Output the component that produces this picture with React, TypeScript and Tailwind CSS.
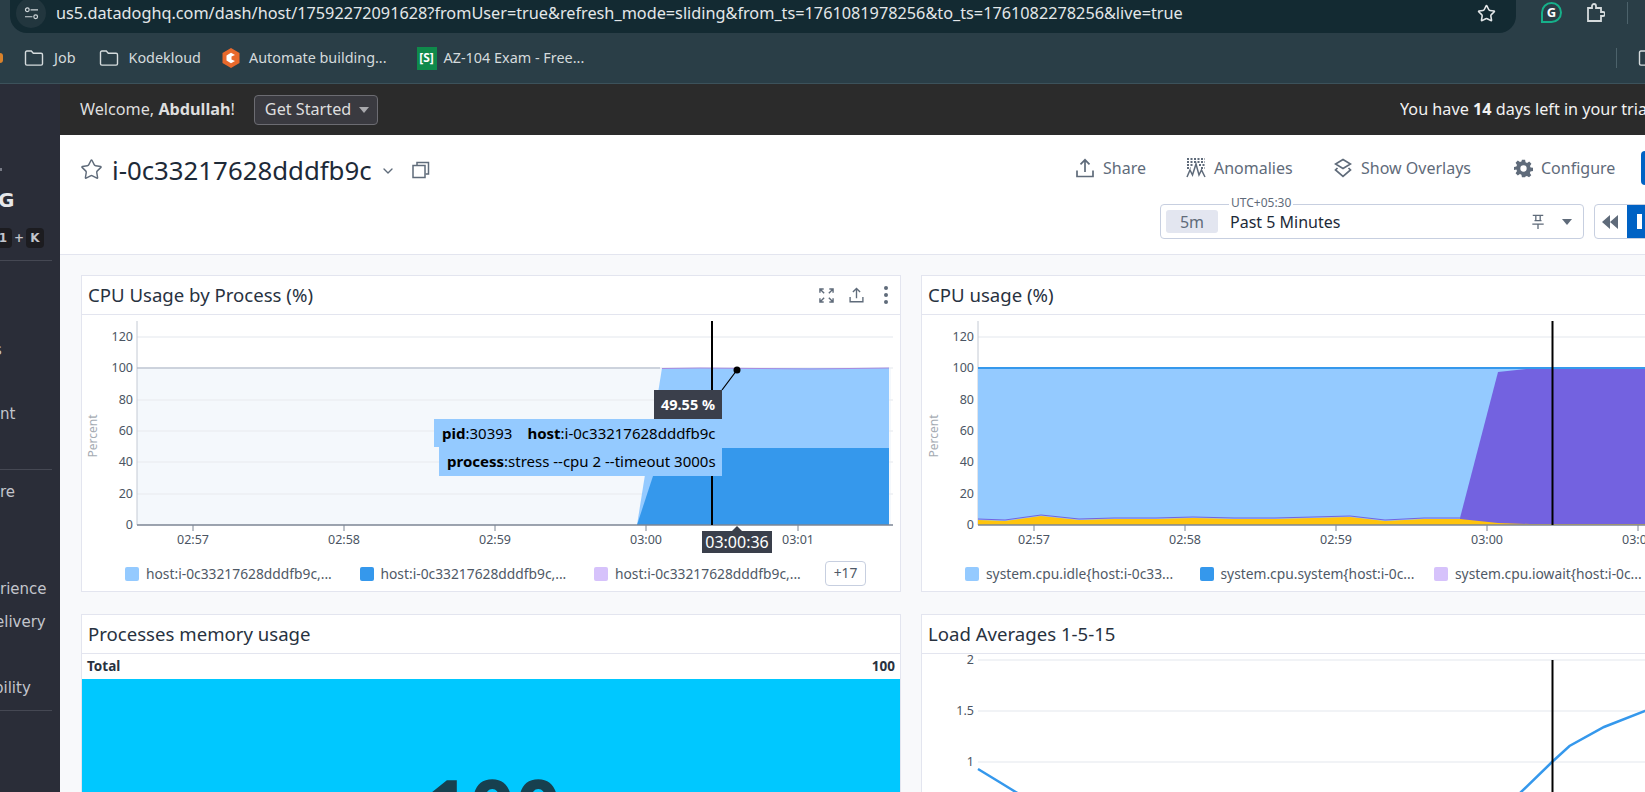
import { ChevronDown, Star } from 'lucide-react'

const FONT = { fontFamily: '"Noto Sans", sans-serif' }

const TICKS = ['02:57', '02:58', '02:59', '03:00', '03:01']
const Y_LABELS = [
  ['120', 337],
  ['100', 368],
  ['80', 400],
  ['60', 431],
  ['40', 462],
  ['20', 494],
  ['0', 525],
] as const

function FolderIcon({ className }: { className?: string }) {
  return (
    <svg viewBox="0 0 20 18" className={`shrink-0 ${className ?? ''}`} fill="none" stroke="currentColor" strokeWidth="1.4">
      <path d="M1.5 3.5c0-.8.6-1.5 1.4-1.5h4.4l2 2.3h7.800c.8 0 1.4.6 1.400 1.400v9c0 .8-.6 1.400-1.400 1.400H2.900c-.8 0-1.400-.6-1.400-1.400z" />
    </svg>
  )
}

function ShareIcon({ className }: { className?: string }) {
  return (
    <svg viewBox="0 0 18 20" className={`shrink-0 ${className ?? ''}`} fill="none" stroke="currentColor" strokeWidth="1.7">
      <path d="M9 14V2M4.500 6.300 9 1.800l4.500 4.500M1 12.500V18.500h16v-6" />
    </svg>
  )
}

function AnomaliesIcon() {
  return (
    <svg viewBox="0 0 20 20" className="w-5 h-5 text-[#5f6b7a]" fill="none" stroke="currentColor">
      <path d="M1 19l3-7 2.500 5L10 6l3 11 2.500-5 3.500 7" strokeWidth="1.500" />
      <path d="M1 1h18M1 4h18M1 7h6M13 7h6M1 10h4M15 10h4" strokeWidth="2" strokeDasharray="2 1.500" />
    </svg>
  )
}

function LayersIcon() {
  return (
    <svg viewBox="0 0 18 20" className="w-[18px] h-5 text-[#5f6b7a]" fill="none" stroke="currentColor" strokeWidth="1.700">
      <path d="M9 1.500 16.500 6 9 10.500 1.500 6z" />
      <path d="M3.500 10 1.500 12 9 18.500 16.500 12l-2-2" />
    </svg>
  )
}

function GearIcon() {
  return (
    <svg viewBox="0 0 24 24" className="w-[19px] h-[19px] text-[#5f6b7a]" fill="currentColor">
      <path fillRule="evenodd" d="M10 1h4l.6 3.200 1.900.8 2.700-1.800 2.800 2.800-1.800 2.700.8 1.900 3 .6v4l-3.200.6-.8 1.900 1.800 2.700-2.800 2.800-2.700-1.800-1.900.8L14 23h-4l-.6-3.200-1.900-.8-2.700 1.800-2.800-2.800 1.800-2.700-.8-1.900L0 14v-4l3-.6.8-1.900L2 4.800 4.800 2l2.700 1.800 1.900-.8zM12 8a4 4 0 1 0 0 8 4 4 0 0 0 0-8z" />
    </svg>
  )
}

function Caret({ className }: { className: string }) {
  return <span className={`w-0 h-0 shrink-0 border-x-[5px] border-x-transparent border-t-[6px] ${className}`} />
}

function Card({ title, actions, children, className }: { title: string; actions?: boolean; children: React.ReactNode; className?: string }) {
  return (
    <div className={`bg-white border border-[#e3e5ef] flex flex-col ${className ?? ''}`}>
      <div className="h-[39px] shrink-0 border-b border-[#e3e5ef] flex items-center pl-[6px] pr-[6px]">
        <span className="text-[18.600px] text-[#28323f]">{title}</span>
        {actions && (
          <div className="ml-auto flex items-center text-[#5f6b7a]">
            <svg viewBox="0 0 16 16" className="w-[15px] h-[15px]" fill="none" stroke="currentColor" strokeWidth="1.500">
              <path d="M1 5V1h4M1 1l4.500 4.500M11 1h4v4M15 1l-4.500 4.500M1 11v4h4M1 15l4.500-4.500M15 11v4h-4M15 15l-4.500-4.500" />
            </svg>
            <ShareIcon className="w-[15px] h-[16px] ml-[15px]" />
            <div className="ml-[20px] mr-[6px] flex flex-col gap-[3px]">
              <span className="w-[4px] h-[4px] rounded-full bg-[#5f6b7a]" />
              <span className="w-[4px] h-[4px] rounded-full bg-[#5f6b7a]" />
              <span className="w-[4px] h-[4px] rounded-full bg-[#5f6b7a]" />
            </div>
          </div>
        )}
      </div>
      {children}
    </div>
  )
}

function Axis({ offset }: { offset: number }) {
  const left = offset === 0 ? 137 : 978
  const right = offset === 0 ? 893 : 1741
  const tickX = offset === 0 ? [193, 344, 495, 646, 798] : [1034, 1185, 1336, 1487, 1638]
  return (
    <>
      {Y_LABELS.map(([label, y]) => (
        <g key={label}>
          {label !== '0' && <line x1={left} x2={right} y1={y} y2={y} stroke="#edeff3" strokeWidth="1.500" />}
          <text x={left - 4} y={y + 4} textAnchor="end" fontSize="12.500" fill="#4b5563">{label}</text>
        </g>
      ))}
      <line x1={left} x2={left} y1={321} y2={525} stroke="#c4cad4" />
      <text transform={`translate(${left - 40} 436) rotate(-90)`} textAnchor="middle" fontSize="12" fill="#a5abb3">Percent</text>
      {tickX.map((x, i) => (
        <g key={x}>
          <line x1={x} x2={x} y1={525} y2={531} stroke="#7d8694" />
          <text x={x} y={543.500} textAnchor="middle" fontSize="12.500" fill="#4b5563">{TICKS[i]}</text>
        </g>
      ))}
    </>
  )
}

function Legend({ items, more }: { items: [string, string][]; more?: string }) {
  return (
    <div className="h-[36px] flex items-center pl-[43px] pt-[2px] text-[13.800px] text-[#4f5966]">
      {items.map(([color, label], i) => (
        <div key={i} className={`flex items-center gap-[7px] ${i === 2 && more ? 'w-[231px]' : 'w-[234.500px]'} shrink-0`}>
          <span className="w-[14px] h-[14px] rounded-[2px] shrink-0" style={{ backgroundColor: color }} />
          <span className="whitespace-nowrap">{label}</span>
        </div>
      ))}
      {more && (
        <span className="w-[41px] h-[25px] border border-[#c7cfe0] rounded-[4px] flex items-center justify-center text-[13.800px] text-[#4f5966] -mt-[2px]">{more}</span>
      )}
    </div>
  )
}

function ProcessChart() {
  return (
    <div className="relative h-[240px] shrink-0">
      <svg viewBox="82 315 818 240" className="w-[818px] h-[240px] block" style={FONT}>
        <rect x="137" y="368" width="754" height="157" fill="#f4f8fc" />
        <Axis offset={0} />
        <path d="M637 525 662 368H889V525Z" fill="#94caff" />
        <path d="M637 525 653 476 680 448H889V525Z" fill="#3598ec" />
        <path d="M137 368H660" stroke="#a9b4c4" strokeWidth="1.200" />
        <path d="M662 368.500 700 368 760 368.500 810 369 889 368" stroke="#a78be0" strokeWidth="1" fill="none" />
        <path d="M137 525H893" stroke="#7d8694" strokeWidth="1.500" />
        <line x1="712" x2="712" y1="321" y2="525" stroke="#000" strokeWidth="2" />
        <line x1="722" x2="737" y1="390" y2="370" stroke="#000" strokeWidth="1.200" />
        <circle cx="737" cy="370" r="3.500" fill="#000" />
      </svg>
      <div className="absolute left-[572px] top-[75px] w-[68px] h-[29px] bg-[#3a3f4b] text-white text-[14.500px] font-bold flex items-center justify-center">49.55 %</div>
      <div className="absolute left-[352px] top-[104px] w-[288px] h-[28px] bg-[#94caff] text-[15px] text-black flex items-center pl-[8px] whitespace-nowrap">
        <b className="font-bold">pid</b>:30393<b className="font-bold ml-[15px]">host</b>:i-0c33217628dddfb9c
      </div>
      <div className="absolute left-[357px] top-[132px] w-[283px] h-[29px] bg-[#94caff] text-[15px] text-black flex items-center pl-[8px] whitespace-nowrap">
        <b className="font-bold">process</b>:stress --cpu 2 --timeout 3000s
      </div>
      <div className="absolute left-[620px] top-[216px] w-[70px] h-[22px] bg-[#3a3f4b] text-white text-[16px] flex items-center justify-center">03:00:36</div>
      <div className="absolute left-[649px] top-[211px] w-0 h-0 border-x-[6px] border-x-transparent border-b-[6px] border-b-[#3a3f4b]" />
    </div>
  )
}

function CpuChart() {
  return (
    <svg viewBox="922 315 818 240" className="w-[818px] h-[240px] block shrink-0" style={FONT}>
      <Axis offset={1} />
      <path d="M978 368H1741V525H978Z" fill="#94caff" />
      <path d="M1460 518 1498 372 1535 368H1741V525H1460Z" fill="#7362e0" />
      <path d="M978 520 1005 521 1041 516 1079 520 1114 519 1156 519 1193 518 1234 519 1275 519 1313 518 1350 517 1385 521 1424 519 1460 519 1498 523 1530 524 1741 524V525H978Z" fill="#ffc40d" />
      <path d="M978 519 1005 520 1041 515 1079 519 1114 518 1156 518 1193 517 1234 518 1275 518 1313 517 1350 516 1385 520 1424 518 1460 518" stroke="#7362e0" strokeWidth="1" fill="none" />
      <path d="M978 368H1741" stroke="#3598ec" strokeWidth="1.800" />
      <path d="M978 525H1741" stroke="#7d8694" strokeWidth="1.500" />
      <line x1="1552.500" x2="1552.500" y1="321" y2="525" stroke="#000" strokeWidth="2" />
    </svg>
  )
}

function LoadChart() {
  return (
    <svg viewBox="922 654 818 140" className="w-[818px] h-[140px] block shrink-0" style={FONT}>
      {[['2', 660], ['1.5', 711], ['1', 762]].map(([label, y]) => (
        <g key={label}>
          <line x1="978" x2="1741" y1={y} y2={y} stroke="#edeff3" strokeWidth="1.500" />
          <text x="974" y={Number(y) + 4} textAnchor="end" fontSize="12.500" fill="#4b5563">{label}</text>
        </g>
      ))}
      <path d="M978 769 1001 783 1019 794M1519 794 1552 762 1569.500 746 1604 727 1645 711 1741 690" stroke="#3598ec" strokeWidth="2.500" fill="none" />
      <line x1="1552.500" x2="1552.500" y1="660" y2="794" stroke="#000" strokeWidth="2" />
    </svg>
  )
}

export default function App() {
  return (
    <div className="w-[1645px] h-[792px] overflow-hidden flex flex-col" style={FONT}>
      {/* browser chrome */}
      <div className="h-[84px] shrink-0 bg-[#2a3e47] border-b border-[#3c525b] flex flex-col text-[#d5dbdd]">
        <div className="h-[33px] flex items-start">
          <div className="ml-[10px] w-[1506px] h-[33px] bg-[#132a32] rounded-b-[17px] flex items-center pb-[7px] overflow-hidden">
            <span className="ml-[6px] w-[30px] h-[30px] shrink-0 rounded-full bg-[#22363e] flex items-center justify-center">
              <svg viewBox="0 0 16 14" className="w-[15px] h-[13px]" fill="none" stroke="#cfd6d9" strokeWidth="1.300">
                <circle cx="3.500" cy="3" r="2" /><path d="M7 3h8M1 10.500h8" /><circle cx="12.500" cy="10.500" r="2" />
              </svg>
            </span>
            <span className="ml-[10px] text-[16.250px] text-[#e3e7e9] whitespace-nowrap">us5.datadoghq.com/dash/host/17592272091628?fromUser=true&refresh_mode=sliding&from_ts=1761081978256&to_ts=1761082278256&live=true</span>
            <Star className="ml-auto mr-[20px] w-[19px] h-[19px] text-[#e3e7e9]" strokeWidth={2} />
          </div>
          <span className="ml-[25px] mt-[2px] w-[21px] h-[21px] rounded-full rounded-bl-[3px] border-[2.500px] border-[#16b08a] text-[13px] font-bold text-white flex items-center justify-center">G</span>
          <svg viewBox="0 0 20 20" className="ml-[23px] mt-[3px] w-[20px] h-[20px]" fill="none" stroke="#d5dbdd" strokeWidth="1.800">
            <path d="M3 5h4V3a2 2 0 0 1 4 0v2h5v4h2a2 2 0 0 1 0 4h-2v5H3z" />
          </svg>
          <span className="ml-[22px] mt-[2px] w-px h-[22px] bg-[#4c626b]" />
        </div>
        <div className="flex-1 flex items-center text-[14.400px]">
          <span className="w-[3px] h-[10px] bg-[#d9822b] rounded-r-full" />
          <FolderIcon className="ml-[21px] w-[20px] h-[18px]" />
          <span className="ml-[10px]">Job</span>
          <FolderIcon className="ml-[23px] w-[20px] h-[18px]" />
          <span className="ml-[10px]">Kodekloud</span>
          <svg viewBox="0 0 20 20" className="ml-[20px] w-[20px] h-[20px]">
            <path d="M10 0 18.500 5v10L10 20 1.500 15V5z" fill="#e8692c" />
            <path d="M14 7 10 4.800 5.500 7.500v5L10 15.200l4-2.200-3.500-1.500V8.500z" fill="#fff" />
          </svg>
          <span className="ml-[8px]">Automate building...</span>
          <span className="ml-[30px] w-[20px] h-[23px] bg-[#0f8a4b] text-white text-[12px] font-bold flex items-center justify-center">[S]</span>
          <span className="ml-[7px]">AZ-104 Exam - Free...</span>
          <span className="ml-auto w-px h-[20px] bg-[#4c626b]" />
          <FolderIcon className="ml-[21px] mr-[-13px] w-[20px] h-[18px]" />
        </div>
      </div>

      <div className="flex-1 flex min-h-0">
        {/* clipped nav */}
        <div className="w-[60px] shrink-0 bg-[#2a2d38] overflow-hidden text-[15px] text-[#c3c5cc] whitespace-nowrap" style={{ fontFamily: '"DejaVu Sans", sans-serif' }}>
          <div className="mt-[84px] w-[2px] h-[3px] bg-[#777a85]" />
          <div className="mt-[15px] -ml-[2px] text-[20px] font-bold text-[#e6e7ea] leading-[28px]">G</div>
          <div className="mt-[14px] flex items-center text-[12px] font-bold">
            <span className="-ml-[6px] w-[18px] h-[20px] rounded-[4px] bg-[#1c1c20] flex items-center justify-center">1</span>
            <span className="w-[14px] text-center">+</span>
            <span className="w-[18px] h-[20px] rounded-[4px] bg-[#1c1c20] flex items-center justify-center">K</span>
          </div>
          <div className="mt-[12px] w-[52px] h-px bg-[#454853]" />
          <div className="mt-[79px] -ml-[6px] leading-[20px]">s</div>
          <div className="mt-[44px] leading-[20px]">nt</div>
          <div className="mt-[45px] w-[52px] h-px bg-[#454853]" />
          <div className="mt-[12px] leading-[20px]">re</div>
          <div className="mt-[77px] leading-[20px]">rience</div>
          <div className="mt-[13px] -ml-[5px] leading-[20px]">elivery</div>
          <div className="mt-[46px] -ml-[6px] leading-[20px]">bility</div>
          <div className="mt-[12px] w-[52px] h-px bg-[#454853]" />
        </div>

        <div className="flex-1 min-w-0 flex flex-col">
          {/* welcome banner */}
          <div className="h-[51px] shrink-0 bg-[#2b2b2b] flex items-center text-[16.200px] text-[#dedede] whitespace-nowrap">
            <span className="ml-[20px]">Welcome, <b className="font-bold">Abdullah</b>!</span>
            <button className="ml-[19px] w-[124px] h-[30px] rounded-[4px] bg-[#3a3a40] border border-[#6c6c72] flex items-center pl-[10px] gap-[8px] text-[#dedede]">
              Get Started
              <Caret className="border-t-[#a9a9ad]" />
            </button>
            <span className="ml-auto text-[#f2f2f2] w-[245px] overflow-hidden">You have <b className="font-bold">14</b> days left in your trial</span>
          </div>

          {/* dashboard header */}
          <div className="h-[120px] shrink-0 bg-white border-b border-[#e3e5ef] flex">
            <div className="pl-[20px] pt-[18px] flex items-start">
              <Star className="w-[23px] h-[23px] mt-[5px] text-[#5f6b7a]" strokeWidth={1.500} />
              <span className="ml-[9px] text-[25.800px] leading-[35px] text-[#1d2a38] whitespace-nowrap">i-0c33217628dddfb9c</span>
              <ChevronDown className="ml-[8px] mt-[10px] w-[16px] h-[16px] text-[#5f6b7a]" />
              <svg viewBox="0 0 18 18" className="ml-[16px] mt-[8px] w-[18px] h-[18px] text-[#5f6b7a]" fill="none" stroke="currentColor" strokeWidth="1.500">
                <path d="M5 4V1.500h11.500V13H13.500" /><rect x="1" y="4.500" width="12" height="12" />
              </svg>
            </div>
            <div className="ml-auto -mr-[20px] flex flex-col w-[600px] shrink-0 relative">
              <div className="h-[69px] flex items-center text-[16px] text-[#5f6b7a] whitespace-nowrap pb-[3px] pl-[11px]">
                <ShareIcon className="w-[18px] h-[20px]" />
                <span className="ml-[9px] w-[43px]">Share</span>
                <span className="ml-[40px]"><AnomaliesIcon /></span>
                <span className="ml-[8px] w-[80px]">Anomalies</span>
                <span className="ml-[40px]"><LayersIcon /></span>
                <span className="ml-[9px] w-[112px]">Show Overlays</span>
                <span className="ml-[41px]"><GearIcon /></span>
                <span className="ml-[8px] w-[75px]">Configure</span>
                <span className="ml-[25px] w-[20px] h-[34px] shrink-0 bg-[#0062c4] rounded-l-[4px]" />
              </div>
              <div className="flex items-start pl-[95px]">
                <div className="relative w-[424px] h-[35px] shrink-0 rounded-[4px] border border-[#c7cfe0] flex items-center pl-[5px]">
                  <span className="absolute left-[68px] -top-[10px] px-[2px] bg-white text-[12px] leading-[16px] text-[#5f6b7a]">UTC+05:30</span>
                  <span className="w-[52px] h-[23px] rounded-[3px] bg-[#e3e6f0] text-[16px] text-[#5f6b7a] flex items-center justify-center">5m</span>
                  <span className="ml-[12px] text-[16px] text-[#1d2a38] whitespace-nowrap">Past 5 Minutes</span>
                  <svg viewBox="0 0 16 18" className="ml-auto w-[14px] h-[16px] text-[#5f6b7a]" fill="none" stroke="currentColor" strokeWidth="1.500">
                    <path d="M2 1.500h12M4 7.500h8M5.500 1.500v6M10.500 1.500v6M1.500 11.500h13M8 11.500V17" />
                  </svg>
                  <Caret className="ml-[17px] mr-[11px] border-t-[#5f6b7a]" />
                </div>
                <div className="ml-[10px] w-[60px] h-[35px] shrink-0 rounded-l-[4px] border border-[#c7cfe0] flex items-center overflow-hidden">
                  <svg viewBox="0 0 16 14" className="ml-[7px] w-[16px] h-[14px] shrink-0 text-[#5f6b7a]" fill="currentColor">
                    <path d="M8 0v14L0 7zM16 0v14L8 7z" />
                  </svg>
                  <span className="ml-[9px] flex-1 h-full bg-[#0062c4] flex items-center pl-[10px]">
                    <span className="w-[5px] h-[15px] bg-white" />
                  </span>
                </div>
              </div>
            </div>
          </div>

          {/* widget grid */}
          <div className="flex-1 min-h-0 bg-[#f8f9fb] pl-[21px] pt-[20px] overflow-hidden">
            <div className="grid grid-cols-[820px_820px] gap-x-[20px] gap-y-[22px] w-[1660px]">
              <Card title="CPU Usage by Process (%)" actions className="h-[317px]">
                <ProcessChart />
                <Legend
                  items={[
                    ['#94caff', 'host:i-0c33217628dddfb9c,...'],
                    ['#3598ec', 'host:i-0c33217628dddfb9c,...'],
                    ['#d6c2fb', 'host:i-0c33217628dddfb9c,...'],
                  ]}
                  more="+17"
                />
              </Card>
              <Card title="CPU usage (%)" className="h-[317px]">
                <CpuChart />
                <Legend
                  items={[
                    ['#94caff', 'system.cpu.idle{host:i-0c33...'],
                    ['#3598ec', 'system.cpu.system{host:i-0c...'],
                    ['#d6c2fb', 'system.cpu.iowait{host:i-0c...'],
                  ]}
                />
              </Card>
              <Card title="Processes memory usage" className="h-[300px]">
                <div className="h-[25px] shrink-0 flex items-center justify-between px-[5px] text-[13.500px] font-bold text-[#28323f]">
                  <span>Total</span>
                  <span>100</span>
                </div>
                <div className="flex-1 bg-[#00c8ff] flex justify-center text-[80px] font-bold leading-none text-[#17404f] pt-[88px] pl-[3px]">100</div>
              </Card>
              <Card title="Load Averages 1-5-15" className="h-[300px]">
                <LoadChart />
              </Card>
            </div>
          </div>
        </div>
      </div>
    </div>
  )
}
